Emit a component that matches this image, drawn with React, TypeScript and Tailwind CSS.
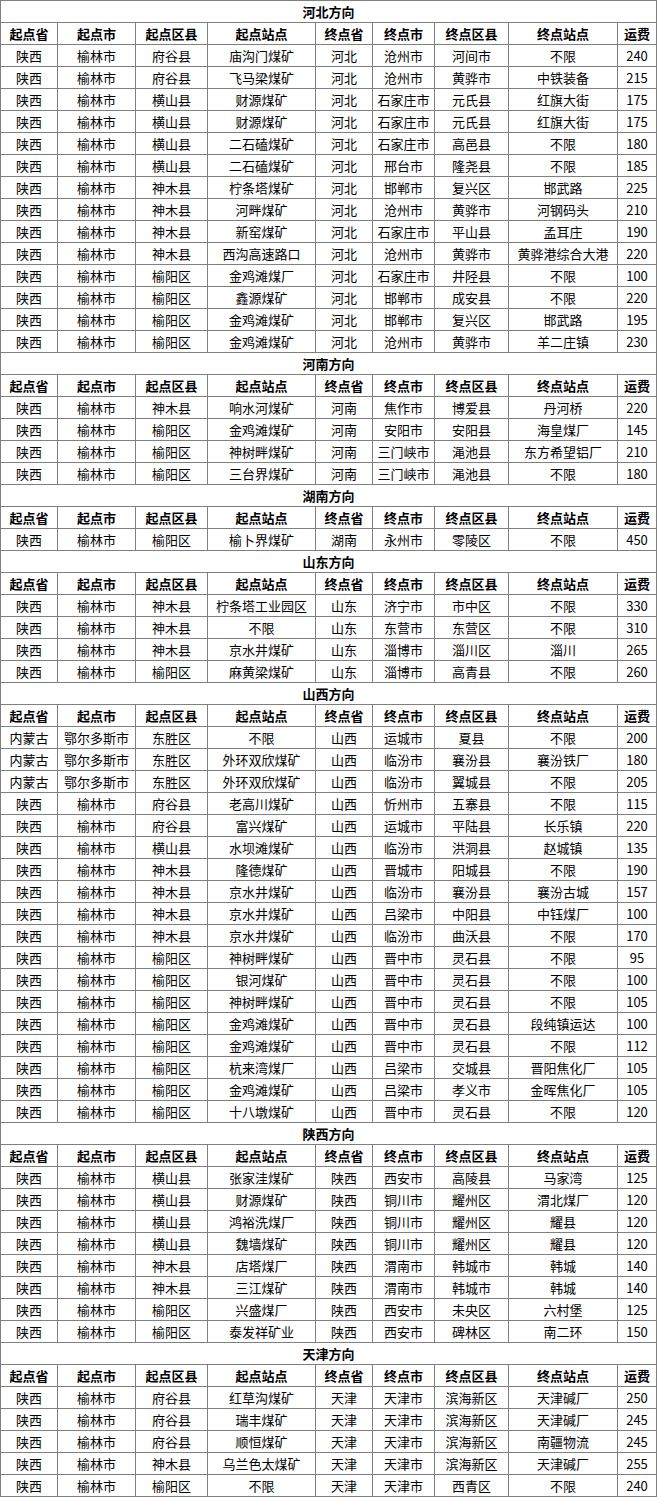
import React from "react";

type Row = string[];
const header = ["起点省", "起点市", "起点区县", "起点站点", "终点省", "终点市", "终点区县", "终点站点", "运费"];

const d = (s: string): Row => s.split(" ");

const sections: { title: string; rows: Row[] }[] = [
  {
    title: "河北方向",
    rows: [
      d("陕西 榆林市 府谷县 庙沟门煤矿 河北 沧州市 河间市 不限 240"),
      d("陕西 榆林市 府谷县 飞马梁煤矿 河北 沧州市 黄骅市 中铁装备 215"),
      d("陕西 榆林市 横山县 财源煤矿 河北 石家庄市 元氏县 红旗大街 175"),
      d("陕西 榆林市 横山县 财源煤矿 河北 石家庄市 元氏县 红旗大街 175"),
      d("陕西 榆林市 横山县 二石磕煤矿 河北 石家庄市 高邑县 不限 180"),
      d("陕西 榆林市 横山县 二石磕煤矿 河北 邢台市 隆尧县 不限 185"),
      d("陕西 榆林市 神木县 柠条塔煤矿 河北 邯郸市 复兴区 邯武路 225"),
      d("陕西 榆林市 神木县 河畔煤矿 河北 沧州市 黄骅市 河钢码头 210"),
      d("陕西 榆林市 神木县 新窑煤矿 河北 石家庄市 平山县 孟耳庄 190"),
      d("陕西 榆林市 神木县 西沟高速路口 河北 沧州市 黄骅市 黄骅港综合大港 220"),
      d("陕西 榆林市 榆阳区 金鸡滩煤厂 河北 石家庄市 井陉县 不限 100"),
      d("陕西 榆林市 榆阳区 鑫源煤矿 河北 邯郸市 成安县 不限 220"),
      d("陕西 榆林市 榆阳区 金鸡滩煤矿 河北 邯郸市 复兴区 邯武路 195"),
      d("陕西 榆林市 榆阳区 金鸡滩煤矿 河北 沧州市 黄骅市 羊二庄镇 230"),
    ],
  },
  {
    title: "河南方向",
    rows: [
      d("陕西 榆林市 神木县 响水河煤矿 河南 焦作市 博爱县 丹河桥 220"),
      d("陕西 榆林市 榆阳区 金鸡滩煤矿 河南 安阳市 安阳县 海皇煤厂 145"),
      d("陕西 榆林市 榆阳区 神树畔煤矿 河南 三门峡市 渑池县 东方希望铝厂 210"),
      d("陕西 榆林市 榆阳区 三台界煤矿 河南 三门峡市 渑池县 不限 180"),
    ],
  },
  {
    title: "湖南方向",
    rows: [d("陕西 榆林市 榆阳区 榆卜界煤矿 湖南 永州市 零陵区 不限 450")],
  },
  {
    title: "山东方向",
    rows: [
      d("陕西 榆林市 神木县 柠条塔工业园区 山东 济宁市 市中区 不限 330"),
      d("陕西 榆林市 神木县 不限 山东 东营市 东营区 不限 310"),
      d("陕西 榆林市 神木县 京水井煤矿 山东 淄博市 淄川区 淄川 265"),
      d("陕西 榆林市 榆阳区 麻黄梁煤矿 山东 淄博市 高青县 不限 260"),
    ],
  },
  {
    title: "山西方向",
    rows: [
      d("内蒙古 鄂尔多斯市 东胜区 不限 山西 运城市 夏县 不限 200"),
      d("内蒙古 鄂尔多斯市 东胜区 外环双欣煤矿 山西 临汾市 襄汾县 襄汾铁厂 180"),
      d("内蒙古 鄂尔多斯市 东胜区 外环双欣煤矿 山西 临汾市 翼城县 不限 205"),
      d("陕西 榆林市 府谷县 老高川煤矿 山西 忻州市 五寨县 不限 115"),
      d("陕西 榆林市 府谷县 富兴煤矿 山西 运城市 平陆县 长乐镇 220"),
      d("陕西 榆林市 横山县 水坝滩煤矿 山西 临汾市 洪洞县 赵城镇 135"),
      d("陕西 榆林市 神木县 隆德煤矿 山西 晋城市 阳城县 不限 190"),
      d("陕西 榆林市 神木县 京水井煤矿 山西 临汾市 襄汾县 襄汾古城 157"),
      d("陕西 榆林市 神木县 京水井煤矿 山西 吕梁市 中阳县 中钰煤厂 100"),
      d("陕西 榆林市 神木县 京水井煤矿 山西 临汾市 曲沃县 不限 170"),
      d("陕西 榆林市 榆阳区 神树畔煤矿 山西 晋中市 灵石县 不限 95"),
      d("陕西 榆林市 榆阳区 银河煤矿 山西 晋中市 灵石县 不限 100"),
      d("陕西 榆林市 榆阳区 神树畔煤矿 山西 晋中市 灵石县 不限 105"),
      d("陕西 榆林市 榆阳区 金鸡滩煤矿 山西 晋中市 灵石县 段纯镇运达 100"),
      d("陕西 榆林市 榆阳区 金鸡滩煤矿 山西 晋中市 灵石县 不限 112"),
      d("陕西 榆林市 榆阳区 杭来湾煤厂 山西 吕梁市 交城县 晋阳焦化厂 105"),
      d("陕西 榆林市 榆阳区 金鸡滩煤矿 山西 吕梁市 孝义市 金晖焦化厂 105"),
      d("陕西 榆林市 榆阳区 十八墩煤矿 山西 晋中市 灵石县 不限 120"),
    ],
  },
  {
    title: "陕西方向",
    rows: [
      d("陕西 榆林市 横山县 张家洼煤矿 陕西 西安市 高陵县 马家湾 125"),
      d("陕西 榆林市 横山县 财源煤矿 陕西 铜川市 耀州区 渭北煤厂 120"),
      d("陕西 榆林市 横山县 鸿裕洗煤厂 陕西 铜川市 耀州区 耀县 120"),
      d("陕西 榆林市 横山县 魏墙煤矿 陕西 铜川市 耀州区 耀县 120"),
      d("陕西 榆林市 神木县 店塔煤厂 陕西 渭南市 韩城市 韩城 140"),
      d("陕西 榆林市 神木县 三江煤矿 陕西 渭南市 韩城市 韩城 140"),
      d("陕西 榆林市 榆阳区 兴盛煤厂 陕西 西安市 未央区 六村堡 125"),
      d("陕西 榆林市 榆阳区 泰发祥矿业 陕西 西安市 碑林区 南二环 150"),
    ],
  },
  {
    title: "天津方向",
    rows: [
      d("陕西 榆林市 府谷县 红草沟煤矿 天津 天津市 滨海新区 天津碱厂 250"),
      d("陕西 榆林市 府谷县 瑞丰煤矿 天津 天津市 滨海新区 天津碱厂 245"),
      d("陕西 榆林市 府谷县 顺恒煤矿 天津 天津市 滨海新区 南疆物流 245"),
      d("陕西 榆林市 神木县 乌兰色太煤矿 天津 天津市 滨海新区 天津碱厂 255"),
      d("陕西 榆林市 榆阳区 不限 天津 天津市 西青区 不限 240"),
    ],
  },
];

export default function App() {
  return (
    <div
      className="w-[657px] bg-white text-black text-[13px]"
      style={{ fontFamily: '"Noto Sans CJK SC", "Liberation Sans", sans-serif' }}
    >
      <div className="grid grid-cols-[56px_77px_71px_107px_56px_61px_73px_108px_38px] gap-px bg-[#808080] p-px auto-rows-[21px]">
        {sections.map((s) => (
          <React.Fragment key={s.title}>
            <div className="col-span-9 bg-white flex items-center justify-center font-bold leading-none">
              {s.title}
            </div>
            {header.map((h, i) => (
              <div key={s.title + "h" + i} className="bg-white flex items-center justify-center font-bold leading-none whitespace-nowrap">
                {h}
              </div>
            ))}
            {s.rows.map((r, ri) =>
              r.map((c, ci) => (
                <div
                  key={s.title + ri + "-" + ci}
                  className="bg-white flex items-center justify-center leading-none whitespace-nowrap overflow-hidden"
                >
                  {c}
                </div>
              ))
            )}
          </React.Fragment>
        ))}
      </div>
    </div>
  );
}
